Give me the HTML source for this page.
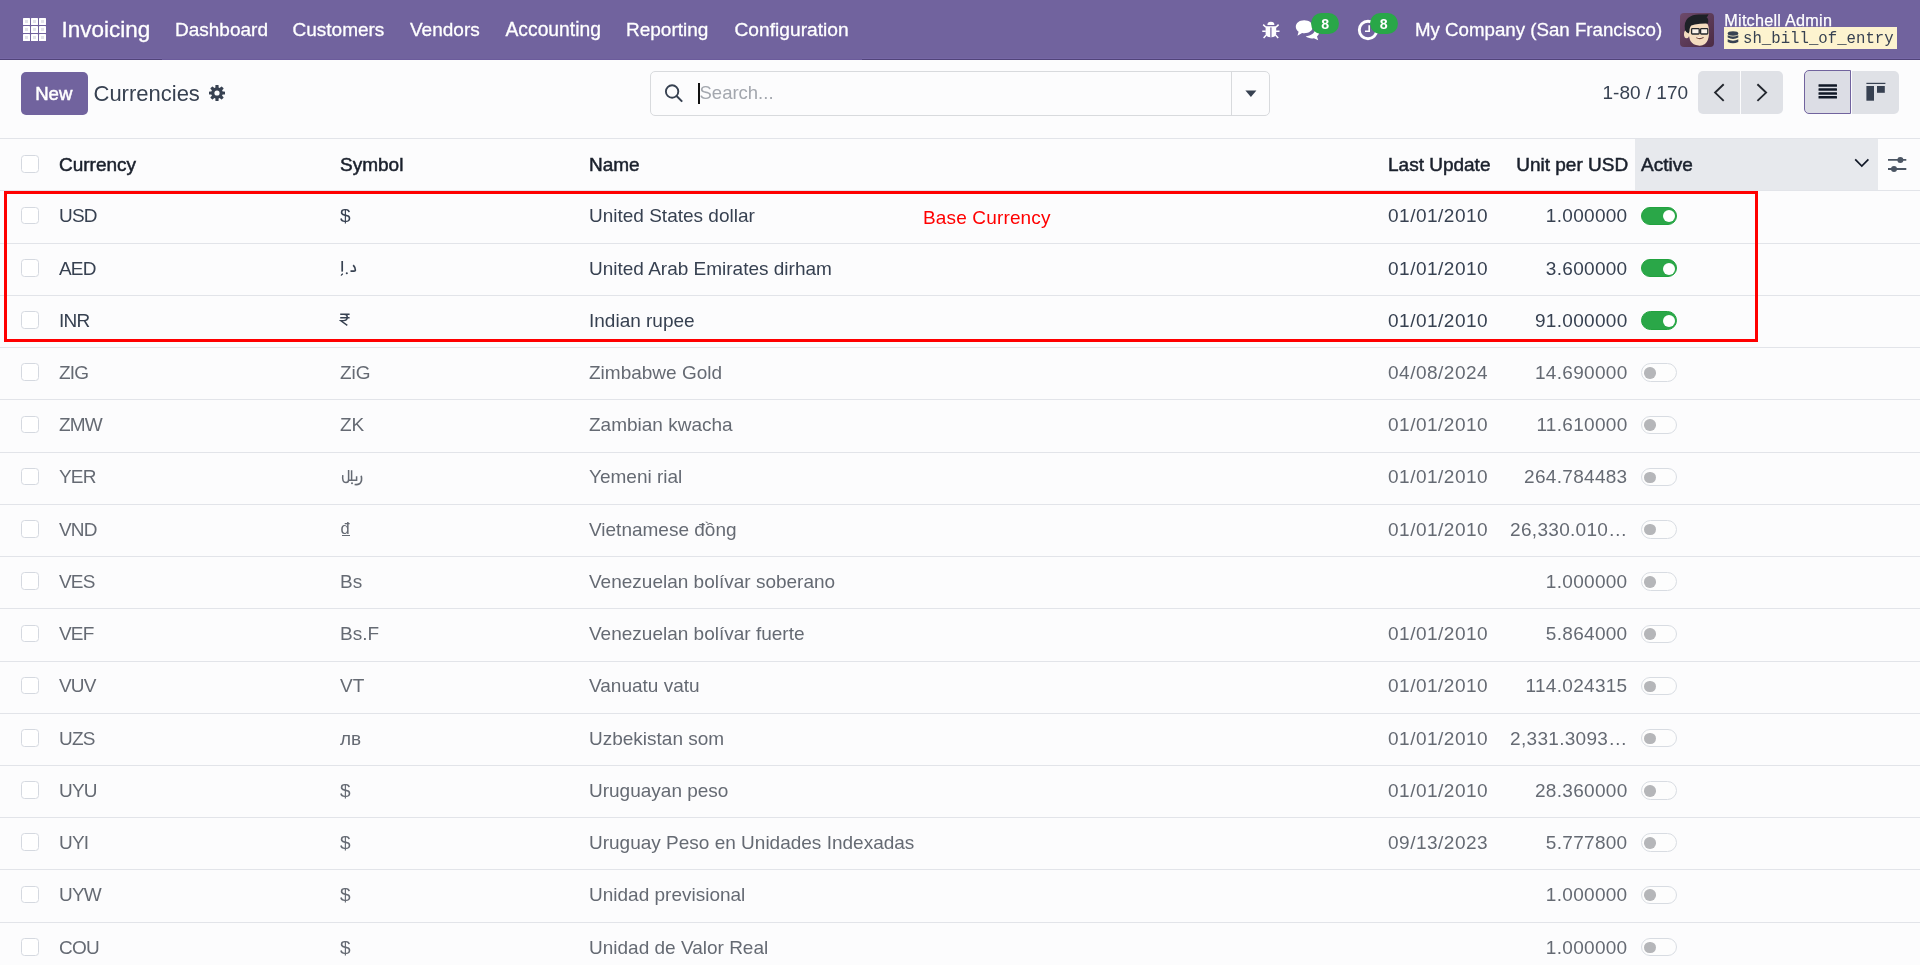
<!DOCTYPE html>
<html><head><meta charset="utf-8">
<style>
*{box-sizing:border-box;margin:0;padding:0}
html,body{width:1920px;height:965px;overflow:hidden;background:#fcfcfd;font-family:"Liberation Sans",sans-serif;color:#374151}
.nav{position:absolute;left:0;top:0;width:1920px;height:60px;background:#71639e;color:#fff}
.nav .t{position:absolute;top:0.2px;height:60px;line-height:60px;font-size:19px;white-space:nowrap;-webkit-text-stroke:0.3px #fff}
.apps{position:absolute;left:23.3px;top:18.1px;width:23px;height:23px}
.apps i{position:absolute;width:6.6px;height:6.6px;background:#fff;border-radius:0.6px}
.apps i:after{content:"";position:absolute;left:2px;top:2px;width:2.6px;height:2.6px;background:#e3e3ea}
.badge{position:absolute;height:21px;width:28px;border-radius:10.5px;background:#29a748;color:#fff;font-weight:700;font-size:14.2px;line-height:23px;text-align:center}
.btn-new{position:absolute;left:21px;top:72px;width:67px;height:42.7px;background:#71639e;border-radius:5px;color:#fff;font-weight:400;-webkit-text-stroke:0.5px #fff;font-size:18.6px;line-height:43.5px;text-align:center;padding-right:1.5px}
.title{position:absolute;left:93.5px;top:73.3px;height:42px;line-height:42px;font-size:22px;color:#374151;white-space:nowrap}
.search{position:absolute;left:650px;top:70.7px;width:620px;height:45.3px;border:1px solid #d8dadd;border-radius:5px;background:#fcfcfd}
.pager{position:absolute;left:1602.5px;top:71px;height:43px;line-height:43px;font-size:19px;color:#374151}
.pbtn{position:absolute;top:70.8px;height:43px;background:#dfe1e6}
.thead{position:absolute;left:0;top:137.5px;width:1920px;height:53.5px;border-top:1px solid #e2e4e9;border-bottom:1px solid #e2e4e9}
.th{position:absolute;top:0px;height:52px;line-height:52px;font-size:19px;font-weight:400;-webkit-text-stroke:0.5px #1a202c;color:#1a202c;white-space:nowrap}
.row{position:absolute;left:0;width:1920px;height:52.23px;border-bottom:1px solid #e2e4e9}
.row .c{position:absolute;top:-1.2px;height:52px;line-height:52px;font-size:19px;white-space:nowrap}
.muted{color:#656a73}
.cb{position:absolute;left:21.3px;top:15.2px;width:17.4px;height:17.6px;border:1px solid #d5d9e0;border-radius:3.5px;background:#fff}
.cur{left:59px;letter-spacing:-0.8px}
.sym{left:340px}
.nm{left:589px}
.dt{left:1388px;letter-spacing:0.5px}
.rt{right:292.5px;letter-spacing:0.3px;text-align:right}
.isv{position:absolute}
.tg{position:absolute;left:1640.5px;top:15.2px;width:36.5px;height:18.5px;border-radius:10px;border:1px solid #d8dce2;background:#fdfdfd}
.tg i{position:absolute;left:2.6px;top:2.8px;width:11.5px;height:11.5px;border-radius:50%;background:#b5b6b9}
.tg.on{background:#2aa748;border-color:#22a23f}
.tg.on i{left:21px;top:2.7px;width:12px;height:12px;background:#fff}
.redbox{position:absolute;left:4px;top:191px;width:1754px;height:150.5px;border:3px solid #ff0000}
.base{position:absolute;left:923px;top:204.5px;font-size:19px;letter-spacing:0.15px;line-height:26px;color:#ff0000;white-space:nowrap}
</style></head><body><div id="root" style="position:absolute;left:0;top:0;width:1920px;height:965px;will-change:transform">
<div class="nav">
  <div style="position:absolute;left:0;top:59px;width:1920px;height:1px;background:#51437a"></div>
  <div style="position:absolute;left:162px;top:59px;width:700px;height:1px;background:#6b5b9b"></div>
  <div style="position:absolute;left:0;top:58px;width:162px;height:1px;background:#7667a6"></div>
  <div style="position:absolute;left:862px;top:58px;width:1058px;height:1px;background:#7667a6"></div>
  <div class="apps"><i style="left:0.00px;top:0.00px"></i><i style="left:7.95px;top:0.00px"></i><i style="left:15.90px;top:0.00px"></i><i style="left:0.00px;top:7.95px"></i><i style="left:7.95px;top:7.95px"></i><i style="left:15.90px;top:7.95px"></i><i style="left:0.00px;top:15.90px"></i><i style="left:7.95px;top:15.90px"></i><i style="left:15.90px;top:15.90px"></i></div>
  <span class="t" style="left:61.5px;font-size:22.5px;top:0">Invoicing</span>
  <span class="t" style="left:175px">Dashboard</span>
  <span class="t" style="left:292.5px">Customers</span>
  <span class="t" style="left:410px">Vendors</span>
  <span class="t" style="left:505.5px;font-size:19.3px">Accounting</span>
  <span class="t" style="left:626px">Reporting</span>
  <span class="t" style="left:734.5px;font-size:19.2px">Configuration</span>
<svg width="20" height="20" viewBox="0 0 20 20" style="position:absolute;left:1261px;top:19.5px">
<path d="M6.4 5.1A3.5 3.3 0 0 1 13.4 5.1Z" fill="#fff"/>
<path d="M4.6 6.3H15.2V13.6Q15.2 17.2 9.9 17.2Q4.6 17.2 4.6 13.6Z" fill="#fff"/>
<rect x="9.3" y="7.4" width="1.2" height="9.8" fill="#71639e"/>
<path d="M2.2 4.6L4.9 7.3M17.6 4.6L14.9 7.3M1.3 11.2H4.8M18.5 11.2H15M2.6 17.9L5.3 14.9M17.2 17.9L14.5 14.9" stroke="#fff" stroke-width="1.5" fill="none"/>
</svg><svg width="26" height="22" viewBox="0 0 26 22" style="position:absolute;left:1294px;top:19px">
<path d="M10.2 1.3C5.2 1.3 1.8 4.2 1.8 7.8C1.8 9.8 2.9 11.5 4.6 12.7L3.5 16.8L8.1 14.1C8.8 14.2 9.5 14.3 10.2 14.3C15.2 14.3 18.8 11.4 18.8 7.8C18.8 4.2 15.2 1.3 10.2 1.3Z" fill="#fff"/>
<path d="M20.2 6.5C20.8 7.5 21.1 8.6 21.1 9.8C21.1 14 17 17 11.7 17.2C13.2 18.6 15.5 19.4 18 19.4C18.7 19.4 19.3 19.3 19.9 19.2L24.2 21.2L23 17.5C24.3 16.4 25 15 25 13.5C25 10.6 23.1 8 20.2 6.5Z" fill="#fff"/>
</svg><div class="badge" style="left:1311.3px;top:12.6px">8</div><svg width="24" height="24" viewBox="0 0 24 24" style="position:absolute;left:1356px;top:17.75px">
<circle cx="12" cy="12" r="8.7" stroke="#fff" stroke-width="2.9" fill="none"/>
<path d="M13.2 7.2V13.2H9" stroke="#fff" stroke-width="1.6" fill="none"/>
</svg><div class="badge" style="left:1369.8px;top:13.1px">8</div>
  <span class="t" style="left:1415px;font-size:18.7px">My Company (San Francisco)</span>
<svg width="34" height="34" viewBox="0 0 34 34" style="position:absolute;left:1680px;top:13px">
<defs><linearGradient id="avg" x1="0" y1="0" x2="1" y2="1"><stop offset="0" stop-color="#6d4a6b"/><stop offset="1" stop-color="#4b2b43"/></linearGradient></defs>
<rect x="0" y="0" width="34" height="34" rx="4" fill="url(#avg)"/>
<ellipse cx="6.6" cy="21.2" rx="2.6" ry="4" fill="#f4dcbf"/>
<path d="M8.6 14Q9 9 15 8.6Q24 8 27.5 11Q29.3 14 29 21Q28.6 28 25 31Q22 33 18.5 32.6Q13 32 10.5 28Q8.4 24 8.6 14Z" fill="#f4dcbf"/>
<path d="M5 17Q3.6 9 8 5Q13 1 21 1.6Q26 1.5 28.6 1.2Q27.6 3.6 26.6 4.2Q29 6 28 10.6Q25 10.2 20 10.8Q14 11.3 11.3 12.6Q9.6 14 9.4 18.5L8.6 20.5Q6 19.5 5 17Z" fill="#1d2126"/>
<rect x="11.6" y="15.6" width="7.6" height="5.4" rx="0.8" fill="#fbf3ea" stroke="#25282c" stroke-width="1.3"/>
<rect x="20.6" y="15.6" width="7.2" height="5.4" rx="0.8" fill="#fbf3ea" stroke="#25282c" stroke-width="1.3"/>
<path d="M19.2 17.2H20.6" stroke="#25282c" stroke-width="1"/>
<path d="M16.3 24.6Q20 26.8 23.6 24.4" stroke="#6b4036" stroke-width="1.1" fill="#fff"/>
</svg>
  <span style="position:absolute;left:1724.3px;top:10px;font-size:16.2px;letter-spacing:0.25px;line-height:20px;color:#fff;-webkit-text-stroke:0.25px #fff;white-space:nowrap">Mitchell Admin</span>
  <div style="position:absolute;left:1724px;top:26.6px;width:172.5px;height:22.2px;background:#fdf3cf"></div>
<svg width="12" height="14" viewBox="0 0 12 14" style="position:absolute;left:1726.5px;top:31.3px">
<ellipse cx="6" cy="2.5" rx="5.3" ry="2.2" fill="#374151"/>
<path d="M0.7 4.2Q6 7 11.3 4.2V6.6Q6 9.4 0.7 6.6Z" fill="#374151"/>
<path d="M0.7 8.3Q6 11.1 11.3 8.3V10.9Q6 13.7 0.7 10.9Z" fill="#374151"/>
</svg>
  <span style="position:absolute;left:1743px;top:28px;font-family:'Liberation Mono',monospace;font-size:15.7px;line-height:22px;color:#374151;white-space:nowrap">sh_bill_of_entry</span>
</div>
<div class="btn-new">New</div>
<div class="title">Currencies</div>
<svg width="18" height="18" viewBox="-9 -9 18 18" style="position:absolute;left:208px;top:84.2px">
<g fill="#374151">
<circle r="5.8"/>
<rect x="-1.6" y="-8" width="3.2" height="4" rx="0.6" transform="rotate(0)"/><rect x="-1.6" y="-8" width="3.2" height="4" rx="0.6" transform="rotate(45)"/><rect x="-1.6" y="-8" width="3.2" height="4" rx="0.6" transform="rotate(90)"/><rect x="-1.6" y="-8" width="3.2" height="4" rx="0.6" transform="rotate(135)"/><rect x="-1.6" y="-8" width="3.2" height="4" rx="0.6" transform="rotate(180)"/><rect x="-1.6" y="-8" width="3.2" height="4" rx="0.6" transform="rotate(225)"/><rect x="-1.6" y="-8" width="3.2" height="4" rx="0.6" transform="rotate(270)"/><rect x="-1.6" y="-8" width="3.2" height="4" rx="0.6" transform="rotate(315)"/>
</g><circle r="2.6" fill="#fcfcfd"/>
</svg>
<div class="search"></div>
<div style="position:absolute;left:1231px;top:71px;width:1px;height:44px;background:#d8dadd"></div>
<svg width="20" height="20" viewBox="0 0 20 20" style="position:absolute;left:663.5px;top:83px">
<circle cx="8.1" cy="8.5" r="6.2" stroke="#374151" stroke-width="1.9" fill="none"/>
<path d="M12.6 13L18.2 18.6" stroke="#374151" stroke-width="2" fill="none"/>
</svg><svg width="12" height="8" viewBox="0 0 12 8" style="position:absolute;left:1244.5px;top:89.8px"><path d="M0.4 0.5H11.4L5.9 7Z" fill="#374151"/></svg>
<div style="position:absolute;left:698px;top:83px;width:1.6px;height:21px;background:#111"></div>
<span style="position:absolute;left:699.5px;top:71px;line-height:44px;font-size:18.5px;color:#a3a7ae">Search...</span>
<div class="pager">1-80 / 170</div>
<div class="pbtn" style="left:1698px;width:42px;border-radius:5px 0 0 5px"></div>
<div class="pbtn" style="left:1741.2px;width:41.8px;border-radius:0 5px 5px 0"></div>
<svg width="14" height="20" viewBox="0 0 14 20" style="position:absolute;left:1712.5px;top:82.7px"><path d="M10.7 1.3L2.1 9.6L10.7 17.9" stroke="#23272e" stroke-width="1.9" fill="none"/></svg><svg width="14" height="20" viewBox="0 0 14 20" style="position:absolute;left:1755.3px;top:82.7px"><path d="M2.4 1.3L11.1 9.6L2.4 17.9" stroke="#23272e" stroke-width="1.9" fill="none"/></svg>
<div class="pbtn" style="left:1803.7px;width:47.5px;border-radius:5px 0 0 5px;background:#dcdde5;border:1px solid #71639e;top:70.3px;height:43.5px"></div>
<div class="pbtn" style="left:1852px;width:47px;border-radius:0 5px 5px 0"></div>
<svg width="20" height="16" viewBox="0 0 20 16" style="position:absolute;left:1817.5px;top:83px">
<g fill="#111827"><rect x="0.5" y="1.2" width="18.5" height="2.5" rx="0.5"/><rect x="0.5" y="5.2" width="18.5" height="2.5" rx="0.5"/><rect x="0.5" y="9.2" width="18.5" height="2.5" rx="0.5"/><rect x="0.5" y="13" width="18.5" height="2.5" rx="0.5"/></g></svg><svg width="20" height="20" viewBox="0 0 20 20" style="position:absolute;left:1866px;top:82px">
<g fill="#374151"><rect x="0.4" y="0.8" width="19" height="1.2"/><rect x="0.4" y="4" width="7.6" height="14.7"/><rect x="11" y="4" width="7.8" height="6.8"/></g></svg>
<div class="thead">
  <div class="cb" style="top:16.5px"></div>
  <span class="th" style="left:59px">Currency</span>
  <span class="th" style="left:340px">Symbol</span>
  <span class="th" style="left:589px">Name</span>
  <span class="th" style="left:1388px">Last Update</span>
  <span class="th" style="left:1516.2px">Unit per USD</span>
  <div style="position:absolute;left:1635px;top:0.5px;width:243px;height:51px;background:#e7e9ed"></div>
  <span class="th" style="left:1641px">Active</span>
</div>
<svg width="16" height="10" viewBox="0 0 16 10" style="position:absolute;left:1854px;top:157.5px"><path d="M1.2 1.3L7.8 8L14.4 1.3" stroke="#111827" stroke-width="1.7" fill="none"/></svg><svg width="22" height="18" viewBox="0 0 22 18" style="position:absolute;left:1887px;top:155px">
<path d="M1 4.9H19.3M1 14H19.3" stroke="#4b5563" stroke-width="1.8"/>
<circle cx="13.4" cy="4.9" r="3" fill="#4b5563"/><circle cx="7" cy="14" r="3" fill="#4b5563"/></svg><div class="row" style="top:191.50px"><div class="cb"></div><span class="c cur">USD</span><span class="c sym">$</span><span class="c nm">United States dollar</span><span class="c dt">01/01/2010</span><span class="c rt">1.000000</span><div class="tg on"><i></i></div></div>
<div class="row" style="top:243.73px"><div class="cb"></div><span class="c cur">AED</span><svg class="isv" width="30" height="30" viewBox="0 0 30 30" style="left:339px;top:6px"><path d="M3.2 11V21.6" stroke="currentColor" stroke-width="1.7" fill="none"/><path d="M2.2 25.6Q2.6 24 4 23.8" stroke="currentColor" stroke-width="1.3" fill="none"/><circle cx="7.8" cy="23.3" r="1.05" fill="currentColor"/><path d="M14.2 15.2Q16.6 17.8 16.4 20.2Q16.3 21.1 15 21.1H11.5" stroke="currentColor" stroke-width="1.7" fill="none"/></svg><span class="c nm">United Arab Emirates dirham</span><span class="c dt">01/01/2010</span><span class="c rt">3.600000</span><div class="tg on"><i></i></div></div>
<div class="row" style="top:295.96px"><div class="cb"></div><span class="c cur">INR</span><svg class="isv" width="14" height="20" viewBox="0 0 14 20" style="left:339px;top:15px"><path d="M1.2 3.3H10.6M1.2 6.7H10.6M3.6 3.3H5C7.2 3.3 8.3 4.6 8.3 6.3C8.3 8.1 7 9.6 4.4 9.6H1.6L8.3 14.4" fill="none" stroke="currentColor" stroke-width="1.45"/></svg><span class="c nm">Indian rupee</span><span class="c dt">01/01/2010</span><span class="c rt">91.000000</span><div class="tg on"><i></i></div></div>
<div class="row muted" style="top:348.19px"><div class="cb"></div><span class="c cur">ZIG</span><span class="c sym">ZiG</span><span class="c nm">Zimbabwe Gold</span><span class="c dt">04/08/2024</span><span class="c rt">14.690000</span><div class="tg"><i></i></div></div>
<div class="row muted" style="top:400.42px"><div class="cb"></div><span class="c cur">ZMW</span><span class="c sym">ZK</span><span class="c nm">Zambian kwacha</span><span class="c dt">01/01/2010</span><span class="c rt">11.610000</span><div class="tg"><i></i></div></div>
<div class="row muted" style="top:452.65px"><div class="cb"></div><span class="c cur">YER</span><svg class="isv" width="30" height="30" viewBox="0 0 30 30" style="left:339px;top:6px"><path d="M3.8 16.2Q2.8 23.6 7 23.6Q9.6 23.6 9.6 20.5V11" stroke="currentColor" stroke-width="1.5" fill="none"/><path d="M12.6 11.2V21.2M9.6 21.3H17.6V17.2" stroke="currentColor" stroke-width="1.5" fill="none"/><path d="M22.2 16.8Q23.6 22.2 20.5 24.8Q18.6 26 15.6 25.5" stroke="currentColor" stroke-width="1.6" fill="none"/><circle cx="13" cy="24.2" r="1" fill="currentColor"/></svg><span class="c nm">Yemeni rial</span><span class="c dt">01/01/2010</span><span class="c rt">264.784483</span><div class="tg"><i></i></div></div>
<div class="row muted" style="top:504.88px"><div class="cb"></div><span class="c cur">VND</span><span class="c sym" style="font-size:16.5px;top:-2.4px;left:340.5px">đ</span><div style="position:absolute;left:341.8px;top:30.4px;width:8.6px;height:1.2px;background:currentColor"></div><span class="c nm">Vietnamese đồng</span><span class="c dt">01/01/2010</span><span class="c rt">26,330.010…</span><div class="tg"><i></i></div></div>
<div class="row muted" style="top:557.11px"><div class="cb"></div><span class="c cur">VES</span><span class="c sym">Bs</span><span class="c nm">Venezuelan bolívar soberano</span><span class="c dt"></span><span class="c rt">1.000000</span><div class="tg"><i></i></div></div>
<div class="row muted" style="top:609.34px"><div class="cb"></div><span class="c cur">VEF</span><span class="c sym">Bs.F</span><span class="c nm">Venezuelan bolívar fuerte</span><span class="c dt">01/01/2010</span><span class="c rt">5.864000</span><div class="tg"><i></i></div></div>
<div class="row muted" style="top:661.57px"><div class="cb"></div><span class="c cur">VUV</span><span class="c sym">VT</span><span class="c nm">Vanuatu vatu</span><span class="c dt">01/01/2010</span><span class="c rt">114.024315</span><div class="tg"><i></i></div></div>
<div class="row muted" style="top:713.80px"><div class="cb"></div><span class="c cur">UZS</span><span class="c sym">лв</span><span class="c nm">Uzbekistan som</span><span class="c dt">01/01/2010</span><span class="c rt">2,331.3093…</span><div class="tg"><i></i></div></div>
<div class="row muted" style="top:766.03px"><div class="cb"></div><span class="c cur">UYU</span><span class="c sym">$</span><span class="c nm">Uruguayan peso</span><span class="c dt">01/01/2010</span><span class="c rt">28.360000</span><div class="tg"><i></i></div></div>
<div class="row muted" style="top:818.26px"><div class="cb"></div><span class="c cur">UYI</span><span class="c sym">$</span><span class="c nm">Uruguay Peso en Unidades Indexadas</span><span class="c dt">09/13/2023</span><span class="c rt">5.777800</span><div class="tg"><i></i></div></div>
<div class="row muted" style="top:870.49px"><div class="cb"></div><span class="c cur">UYW</span><span class="c sym">$</span><span class="c nm">Unidad previsional</span><span class="c dt"></span><span class="c rt">1.000000</span><div class="tg"><i></i></div></div>
<div class="row muted" style="top:922.72px"><div class="cb"></div><span class="c cur">COU</span><span class="c sym">$</span><span class="c nm">Unidad de Valor Real</span><span class="c dt"></span><span class="c rt">1.000000</span><div class="tg"><i></i></div></div>
<div class="redbox"></div>
<div class="base">Base Currency</div>
</div></body></html>
